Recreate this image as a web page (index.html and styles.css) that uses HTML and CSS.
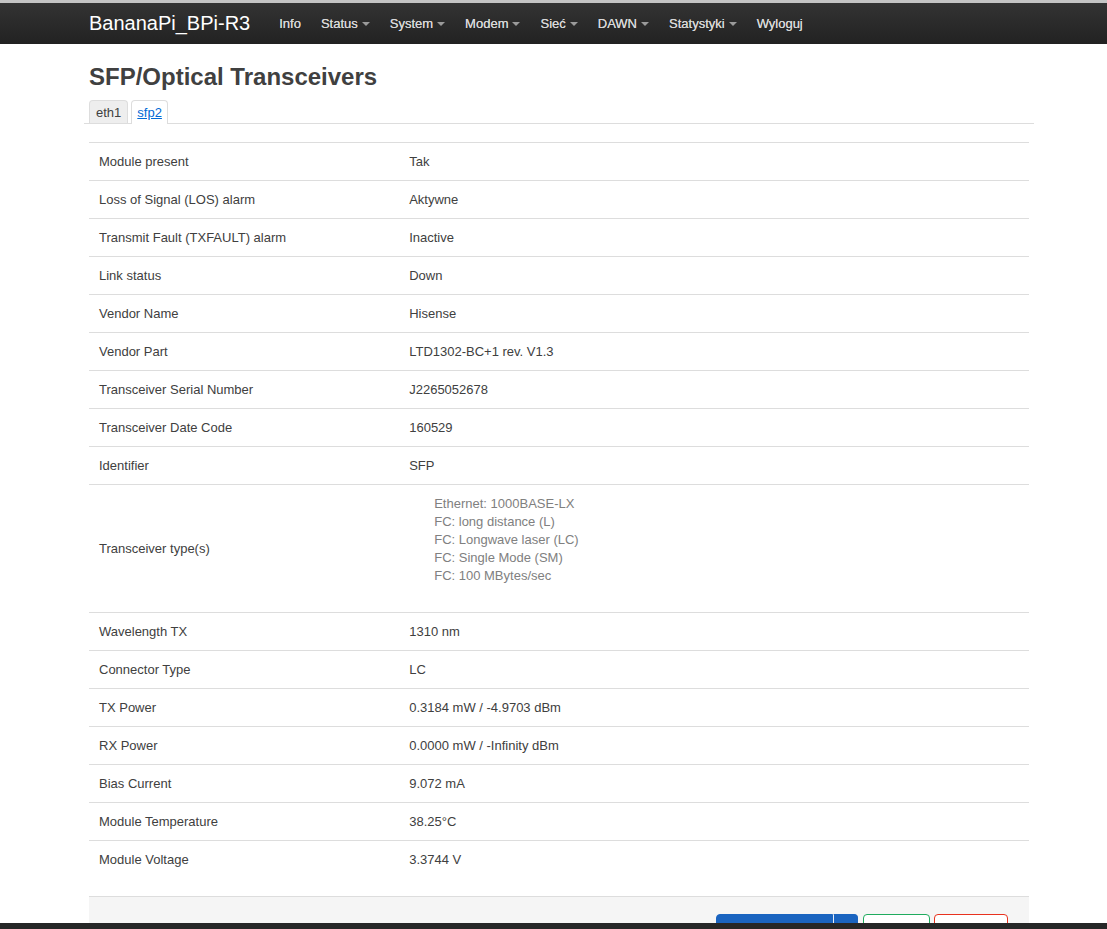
FILE: index.html
```html
<!DOCTYPE html>
<html lang="pl">
<head>
    <meta charset="UTF-8">
    <title>BananaPi_BPi-R3 - SFP/Optical Transceivers</title>
    <link rel="stylesheet" href="styles.css">
</head>
<body>

<!-- Top navigation -->
<header class="topbar">
    <div class="container topbar-inner">
        <a class="brand" href="#">BananaPi_BPi-R3</a>
        <ul class="nav">
            <li><a href="#">Info</a></li>
            <li><a href="#" class="dropdown">Status</a></li>
            <li><a href="#" class="dropdown">System</a></li>
            <li><a href="#" class="dropdown">Modem</a></li>
            <li><a href="#" class="dropdown">Sieć</a></li>
            <li><a href="#" class="dropdown">DAWN</a></li>
            <li><a href="#" class="dropdown">Statystyki</a></li>
            <li><a href="#">Wyloguj</a></li>
        </ul>
    </div>
</header>

<div class="container main">
    <h2 class="page-title">SFP/Optical Transceivers</h2>

    <ul class="tabs">
        <li class="tab"><a href="#">eth1</a></li>
        <li class="tab active"><a href="#">sfp2</a></li>
    </ul>

    <table class="info-table">
        <tr><td>Module present</td><td>Tak</td></tr>
        <tr><td>Loss of Signal (LOS) alarm</td><td>Aktywne</td></tr>
        <tr><td>Transmit Fault (TXFAULT) alarm</td><td>Inactive</td></tr>
        <tr><td>Link status</td><td>Down</td></tr>
        <tr><td>Vendor Name</td><td>Hisense</td></tr>
        <tr><td>Vendor Part</td><td>LTD1302-BC+1 rev. V1.3</td></tr>
        <tr><td>Transceiver Serial Number</td><td>J2265052678</td></tr>
        <tr><td>Transceiver Date Code</td><td>160529</td></tr>
        <tr><td>Identifier</td><td>SFP</td></tr>
        <tr>
            <td>Transceiver type(s)</td>
            <td>
                <ul class="type-list">
                    <li>Ethernet: 1000BASE-LX</li>
                    <li>FC: long distance (L)</li>
                    <li>FC: Longwave laser (LC)</li>
                    <li>FC: Single Mode (SM)</li>
                    <li>FC: 100 MBytes/sec</li>
                </ul>
            </td>
        </tr>
        <tr><td>Wavelength TX</td><td>1310 nm</td></tr>
        <tr><td>Connector Type</td><td>LC</td></tr>
        <tr><td>TX Power</td><td>0.3184 mW / -4.9703 dBm</td></tr>
        <tr><td>RX Power</td><td>0.0000 mW / -Infinity dBm</td></tr>
        <tr><td>Bias Current</td><td>9.072 mA</td></tr>
        <tr><td>Module Temperature</td><td>38.25°C</td></tr>
        <tr><td>Module Voltage</td><td>3.3744 V</td></tr>
    </table>

    <div class="page-actions">
        <div class="btn-split">
            <button class="btn btn-apply">Zapisz i zastosuj</button>
            <button class="btn btn-apply btn-caret">&#9662;</button>
        </div>
        <button class="btn btn-save">Zapisz</button>
        <button class="btn btn-reset">Resetuj</button>
    </div>
</div>

<div class="bottom-bar"></div>

</body>
</html>
```

FILE: styles.css
```css
body {
    margin: 0;
    font-family: 'Liberation Sans', Arial, sans-serif;
    font-size: 13px;
    line-height: 18px;
    color: #404040;
    background-color: #fff;
}

.container {
    width: 940px;
    margin-left: 89px;
}

/* Top navigation bar */
.topbar {
    border-top: 3px solid #c4c4c4;
    background-color: #222;
    background-image: linear-gradient(to bottom, #333, #222);
    height: 41px;
}

.topbar-inner {
    display: flex;
    align-items: center;
    height: 41px;
}

.brand {
    color: #fff;
    font-size: 20px;
    text-decoration: none;
    margin-right: 19px;
    margin-top: -2px;
}

.nav {
    display: flex;
    list-style: none;
    margin: 0;
    padding: 0;
}

.nav a {
    display: block;
    padding: 0 10px;
    color: #d8d8d8;
    text-decoration: none;
    font-size: 13px;
    text-shadow: 0 0 0.4px #d8d8d8;
}

.nav a.dropdown::after {
    content: "";
    display: inline-block;
    margin-left: 4px;
    vertical-align: middle;
    border-left: 4px solid transparent;
    border-right: 4px solid transparent;
    border-top: 4px solid #9a9a9a;
}

/* Page */
.page-title {
    margin: 19px 0 9px;
    font-size: 24px;
    line-height: 28px;
    font-weight: bold;
    color: #404040;
}

.tabs {
    display: flex;
    gap: 3px;
    list-style: none;
    margin: 0 -5px 18px;
    padding: 0 5px;
    border-bottom: 1px solid #ddd;
}

.tab a {
    display: block;
    padding: 2px 6px 1px;
    border: 1px solid #ddd;
    border-bottom: none;
    border-radius: 4px 4px 0 0;
    background-color: #eee;
    color: #404040;
    text-decoration: none;
    font-size: 13px;
    line-height: 19px;
}

.tab.active a {
    background-color: #fff;
    color: #0069d6;
    text-decoration: underline;
    margin-bottom: -1px;
    padding: 2px 5px;
}

/* Info table */
.info-table {
    width: 100%;
    border-collapse: collapse;
}

.info-table td {
    padding: 10px;
    line-height: 17px;
    border-top: 1px solid #ddd;
    vertical-align: middle;
}

.info-table td:first-child {
    width: 33%;
}

.type-list {
    margin: 0 0 17px;
    padding-left: 25px;
    list-style: none;
    color: #808080;
}

.type-list li {
    line-height: 18px;
}

/* Page actions */
.page-actions {
    display: flex;
    justify-content: flex-end;
    gap: 4px;
    margin-top: 18px;
    padding: 17px 21px 18px 20px;
    background-color: #f5f5f5;
    border-top: 1px solid #ddd;
}

.btn {
    font-family: 'Liberation Sans', Arial, sans-serif;
    font-size: 12px;
    line-height: 18px;
    padding: 5px 15px;
    border-radius: 4px;
    cursor: pointer;
    background-color: #fff;
}

.btn-split {
    display: flex;
    margin-right: 1px;
}

.btn-apply {
    background-color: #1a64c0;
    border: 1px solid #1a64c0;
    color: #fff;
    border-radius: 4px 0 0 4px;
    padding: 5px 13px;
}

.btn-caret {
    border-left: 1px solid #e8eef8;
    border-radius: 0 4px 4px 0;
    width: 25px;
    padding: 5px 0;
    font-size: 11px;
}

.btn-save {
    border: 1px solid #1fab5e;
    color: #1fab5e;
}

.btn-reset {
    border: 1px solid #e8321e;
    color: #e8321e;
    padding: 5px 16px 5px 15px;
}

.bottom-bar {
    position: fixed;
    left: 0;
    right: 0;
    bottom: 0;
    height: 6px;
    background-color: #262727;
}
```
